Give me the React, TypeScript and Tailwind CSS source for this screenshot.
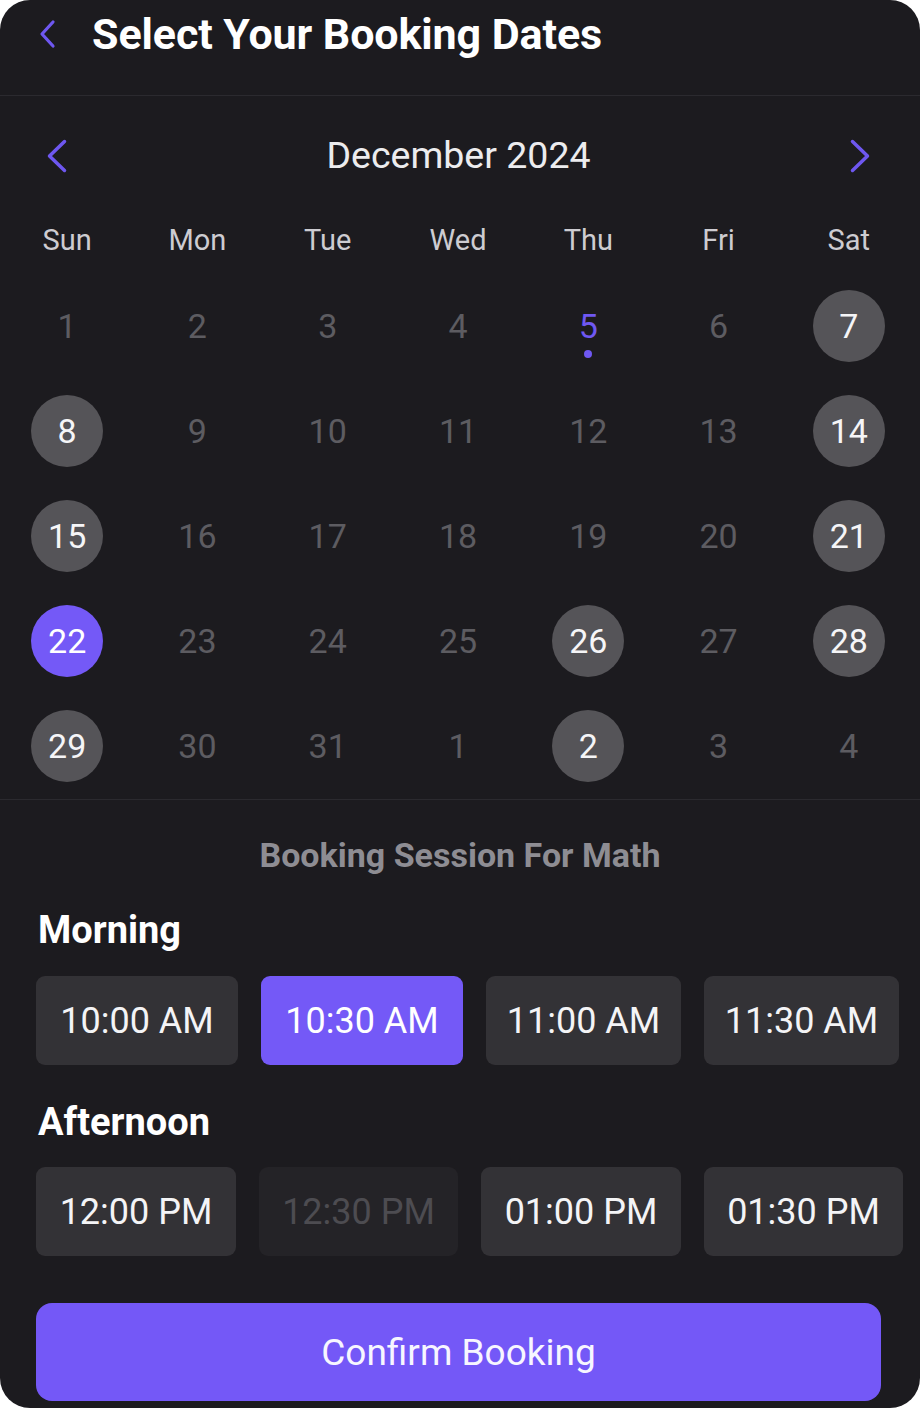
import React from "react";

type Day = { n: number; kind: "off" | "avail" | "sel" | "today" };

const rows: Day[][] = [
  [
    { n: 1, kind: "off" },
    { n: 2, kind: "off" },
    { n: 3, kind: "off" },
    { n: 4, kind: "off" },
    { n: 5, kind: "today" },
    { n: 6, kind: "off" },
    { n: 7, kind: "avail" },
  ],
  [
    { n: 8, kind: "avail" },
    { n: 9, kind: "off" },
    { n: 10, kind: "off" },
    { n: 11, kind: "off" },
    { n: 12, kind: "off" },
    { n: 13, kind: "off" },
    { n: 14, kind: "avail" },
  ],
  [
    { n: 15, kind: "avail" },
    { n: 16, kind: "off" },
    { n: 17, kind: "off" },
    { n: 18, kind: "off" },
    { n: 19, kind: "off" },
    { n: 20, kind: "off" },
    { n: 21, kind: "avail" },
  ],
  [
    { n: 22, kind: "sel" },
    { n: 23, kind: "off" },
    { n: 24, kind: "off" },
    { n: 25, kind: "off" },
    { n: 26, kind: "avail" },
    { n: 27, kind: "off" },
    { n: 28, kind: "avail" },
  ],
  [
    { n: 29, kind: "avail" },
    { n: 30, kind: "off" },
    { n: 31, kind: "off" },
    { n: 1, kind: "off" },
    { n: 2, kind: "avail" },
    { n: 3, kind: "off" },
    { n: 4, kind: "off" },
  ],
];

const weekdays = ["Sun", "Mon", "Tue", "Wed", "Thu", "Fri", "Sat"];

type Slot = { t: string; w: string; state: "normal" | "sel" | "dis" };

const morning: Slot[] = [
  { t: "10:00 AM", w: "w-[202px]", state: "normal" },
  { t: "10:30 AM", w: "w-[202px]", state: "sel" },
  { t: "11:00 AM", w: "w-[195px]", state: "normal" },
  { t: "11:30 AM", w: "w-[195px]", state: "normal" },
];

const afternoon: Slot[] = [
  { t: "12:00 PM", w: "w-[200px]", state: "normal" },
  { t: "12:30 PM", w: "w-[199px]", state: "dis" },
  { t: "01:00 PM", w: "w-[200px]", state: "normal" },
  { t: "01:30 PM", w: "w-[199px]", state: "normal" },
];

function SlotRow({ slots }: { slots: Slot[] }) {
  return (
    <div className="flex gap-[23px] pl-[36px]">
      {slots.map((s) => (
        <div
          key={s.t}
          className={
            "h-[89px] rounded-[9px] flex items-center justify-center text-[36px] leading-none " +
            s.w +
            " " +
            (s.state === "sel"
              ? "bg-[#7459f7] text-white"
              : s.state === "dis"
              ? "bg-[#242327] text-[#4d4c51]"
              : "bg-[#333236] text-[#f4f4f6]")
          }
        >
          {s.t}
        </div>
      ))}
    </div>
  );
}

export default function App() {
  return (
    <div
      className="w-[920px] h-[1408px] rounded-[30px] bg-[#1c1b1f] overflow-hidden flex flex-col"
      style={{ fontFamily: "Roboto, 'Liberation Sans', sans-serif" }}
    >
      {/* Header */}
      <div className="h-[96px] shrink-0 border-b border-[#2b2a2f] flex items-center pb-[27px] pl-[38px]">
        <svg width="18" height="30" viewBox="0 0 18 30" fill="none">
          <polyline
            points="15,3 4,15 15,27"
            stroke="#6e57f0"
            strokeWidth="3.2"
            strokeLinecap="round"
            strokeLinejoin="round"
          />
        </svg>
        <div className="ml-[36px] text-[43px] leading-none font-bold text-white tracking-[-0.1px]">
          Select Your Booking Dates
        </div>
      </div>

      {/* Month row */}
      <div className="h-[120px] shrink-0 flex items-center justify-between pl-[45px] pr-[48px]">
        <svg width="24" height="34" viewBox="0 0 24 34" fill="none">
          <polyline
            points="19.5,2.5 4.5,17 19.5,31.5"
            stroke="#6e57f0"
            strokeWidth="3.5"
            strokeLinecap="round"
            strokeLinejoin="round"
          />
        </svg>
        <div className="text-[37.5px] leading-none text-[#ececee]">December 2024</div>
        <svg width="24" height="34" viewBox="0 0 24 34" fill="none">
          <polyline
            points="4.5,2.5 19.5,17 4.5,31.5"
            stroke="#6e57f0"
            strokeWidth="3.5"
            strokeLinecap="round"
            strokeLinejoin="round"
          />
        </svg>
      </div>

      {/* Weekdays */}
      <div className="h-[48px] shrink-0 grid grid-cols-7 pl-[2px] pr-[6px]">
        {weekdays.map((d) => (
          <div
            key={d}
            className="flex items-center justify-center text-[29px] leading-none text-[#cdccd1]"
          >
            {d}
          </div>
        ))}
      </div>

      {/* Days */}
      <div className="mt-[9px] pl-[2px] pr-[6px] flex flex-col">
        {rows.map((r, ri) => (
          <div key={ri} className="grid grid-cols-7 h-[105px]">
            {r.map((d, di) => (
              <div key={di} className="flex items-center justify-center">
                <div
                  className={
                    "relative w-[72px] h-[72px] rounded-full flex items-center justify-center text-[34px] leading-none " +
                    (d.kind === "avail"
                      ? "bg-[#555458] text-[#f5f5f7]"
                      : d.kind === "sel"
                      ? "bg-[#7459f7] text-white"
                      : d.kind === "today"
                      ? "text-[#6f58f2]"
                      : "text-[#5d5c61]")
                  }
                >
                  {d.n}
                  {d.kind === "today" && (
                    <span className="absolute left-1/2 top-[60px] -translate-x-1/2 w-[8px] h-[8px] rounded-full bg-[#6f58f2]" />
                  )}
                </div>
              </div>
            ))}
          </div>
        ))}
      </div>

      <div className="mt-[1px] border-b border-[#2b2a2f]" />

      {/* Sessions */}
      <div className="flex flex-col">
        <div className="mt-[35px] h-[40px] flex items-center justify-center text-[34px] leading-none font-bold text-[#8e8d93]">
          Booking Session For Math
        </div>

        <div className="mt-[35px] h-[40px] flex items-center pl-[38px] text-[38px] leading-none font-bold text-white">
          Morning
        </div>
        <div className="mt-[26px]">
          <SlotRow slots={morning} />
        </div>

        <div className="mt-[37px] h-[40px] flex items-center pl-[38px] text-[38px] leading-none font-bold text-white">
          Afternoon
        </div>
        <div className="mt-[25px]">
          <SlotRow slots={afternoon} />
        </div>

        <div className="mt-[47px] ml-[36px] w-[845px] h-[98px] rounded-[16px] bg-[#7458f7] flex items-center justify-center text-[37px] leading-none text-[#f7f6ff]">
          Confirm Booking
        </div>
      </div>
    </div>
  );
}
